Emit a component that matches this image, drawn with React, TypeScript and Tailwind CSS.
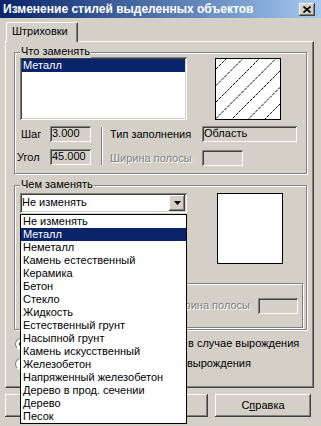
import React from "react";

// win2k 3d borders
const sunken =
  "shadow-[inset_1px_1px_0_#808080,inset_-1px_-1px_0_#ffffff,inset_2px_2px_0_#404040,inset_-2px_-2px_0_#d4d0c8]";
const raised =
  "shadow-[inset_-1px_-1px_0_#404040,inset_1px_1px_0_#ffffff,inset_-2px_-2px_0_#808080,inset_2px_2px_0_#d4d0c8]";
const etched =
  "border border-[#808080] shadow-[inset_1px_1px_0_#ffffff,1px_1px_0_#ffffff]";
const grayText = "text-[#808080] [text-shadow:1px_1px_0_#ffffff]";

const materials = [
  "Не изменять",
  "Металл",
  "Неметалл",
  "Камень естественный",
  "Керамика",
  "Бетон",
  "Стекло",
  "Жидкость",
  "Естественный грунт",
  "Насыпной грунт",
  "Камень искусственный",
  "Железобетон",
  "Напряженный железобетон",
  "Дерево в прод. сечении",
  "Дерево",
  "Песок",
];

function Legend({ children }: { children: React.ReactNode }) {
  return (
    <span className="absolute left-[5px] -top-[8px] bg-[#d4d0c8] px-[1px] leading-[13px]">
      {children}
    </span>
  );
}

function Field({ w, text }: { w: string; text?: string }) {
  return (
    <div className={`${w} h-[16px] bg-[#d4d0c8] ${sunken} pl-[2px] pt-[1px] leading-[13px]`}>
      {text}
    </div>
  );
}

function Hatch() {
  const lines = [10, 26.5, 43, 59.5, 76, 92.5, 109, 125.5];
  return (
    <svg width="64" height="60" className="block">
      {lines.map((c) => (
        <line
          key={c}
          x1={0}
          y1={c}
          x2={c}
          y2={0}
          stroke="#000"
          strokeWidth={1}
          strokeDasharray="3 1"
        />
      ))}
    </svg>
  );
}

function Radio({ checked }: { checked?: boolean }) {
  return (
    <div className="w-[12px] h-[12px] rounded-full bg-white border border-t-[#808080] border-l-[#808080] border-b-white border-r-white flex items-center justify-center shrink-0">
      {checked && <div className="w-[4px] h-[4px] rounded-full bg-black" />}
    </div>
  );
}

export default function App() {
  return (
    <div className="relative w-[321px] h-[426px] overflow-hidden bg-[#d4d0c8] text-black text-[11px] leading-[13px] [font-family:'Liberation_Sans',Arial,sans-serif]">
      {/* title bar */}
      <div className="h-[18px] flex items-center justify-between pl-[3px] pr-[6px] bg-linear-to-r from-[#0a246a] to-[#a6caf0]">
        <span className="text-white font-bold text-[12px] whitespace-nowrap">
          Изменение стилей выделенных объектов
        </span>
        <div className={`w-[16px] h-[13px] bg-[#d4d0c8] ${raised} flex items-center justify-center`}>
          <svg width="8" height="7">
            <path d="M0.5 0.5 L7.5 6.5 M7.5 0.5 L0.5 6.5" stroke="#000" strokeWidth="1.6" />
          </svg>
        </div>
      </div>

      {/* tab */}
      <div className="relative z-10 ml-[6px] mt-[4px] w-[72px] h-[20px] bg-[#d4d0c8] border-l border-t border-white border-r border-r-[#404040] rounded-t-[2px] shadow-[inset_-1px_0_0_#808080] pl-[5px] pt-[2px]">
        Штриховки
      </div>

      {/* tab panel */}
      <div className="-mt-[1px] ml-[5px] w-[309px] h-[347px] border-l border-t border-white border-r border-b border-r-[#404040] border-b-[#404040] shadow-[inset_-1px_-1px_0_#808080]">
        {/* what to replace */}
        <div className={`relative ml-[8px] mt-[10px] w-[293px] h-[122px] ${etched} pt-[4px]`}>
          <Legend>Что заменять</Legend>
          <div className="flex pl-[5px]">
            <div className={`w-[167px] h-[63px] bg-white ${sunken} p-[2px]`}>
              <div className="h-[13px] bg-[#0a246a] text-white pl-[1px]">Металл</div>
            </div>
            <div className="ml-[28px] mt-[1px] w-[66px] h-[62px] border border-black bg-white">
              <Hatch />
            </div>
          </div>

          <div className="flex mt-[6px]">
            <div className="flex flex-col gap-[7px]">
              <div className="flex items-center">
                <span className="w-[35px] pl-[6px]">Шаг</span>
                <Field w="w-[41px]" text="3.000" />
              </div>
              <div className="flex items-center">
                <span className="w-[35px] pl-[2px]">Угол</span>
                <Field w="w-[41px]" text="45.000" />
              </div>
            </div>
            <div className="ml-[10px] mt-[1px] w-[2px] h-[38px] border-l border-l-[#808080] border-r border-r-white" />
            <div className="ml-[7px] flex flex-col gap-[8px]">
              <div className="flex items-center">
                <span className="w-[92px]">Тип заполнения</span>
                <Field w="w-[95px]" text="Область" />
              </div>
              <div className="flex items-center">
                <span className={`w-[92px] ${grayText}`}>Ширина полосы</span>
                <Field w="w-[41px]" />
              </div>
            </div>
          </div>
        </div>

        {/* replace with */}
        <div className={`relative ml-[8px] mt-[11px] w-[293px] h-[145px] ${etched} pt-[7px]`}>
          <Legend>Чем заменять</Legend>
          <div className="flex pl-[5px]">
            <div className={`relative w-[167px] h-[20px] bg-white ${sunken} pl-[2px] pt-[3px]`}>
              Не изменять
              <div className={`absolute right-[2px] top-[2px] w-[16px] h-[16px] bg-[#d4d0c8] ${raised} flex items-center justify-center`}>
                <svg width="7" height="4">
                  <polygon points="0,0 7,0 3.5,4" fill="#000" />
                </svg>
              </div>
            </div>
            <div className="ml-[30px] w-[66px] h-[71px] border border-black bg-white" />
          </div>

          <div className={`ml-[5px] mt-[19px] w-[283px] h-[45px] ${etched} flex justify-end items-center pr-[4px]`}>
            <span className={grayText}>рина полосы</span>
            <div className="ml-[8px]">
              <Field w="w-[40px]" />
            </div>
          </div>
        </div>

        {/* radios, labels mostly covered by the open list */}
        <div className="ml-[9px] mt-[7px] flex flex-col gap-[7px]">
          <div className="flex items-center h-[13px] whitespace-nowrap">
            <Radio checked />
            <span className="ml-[161px]">в случае вырождения</span>
          </div>
          <div className="flex items-center h-[13px] whitespace-nowrap">
            <Radio />
            <span className="ml-[160px]">вырождения</span>
          </div>
        </div>
      </div>

      {/* buttons */}
      <div className="flex mt-[6px] ml-[5px] gap-[7px]">
        <div className={`w-[98px] h-[23px] ${raised}`} />
        <div className={`w-[98px] h-[23px] ${raised}`} />
        <div className={`w-[96px] h-[23px] ${raised} flex items-center justify-center`}>
          С<span className="underline">п</span>равка
        </div>
      </div>

      {/* open dropdown list */}
      <div className="absolute left-[20px] top-[214px] w-[167px] h-[210px] border border-black bg-white">
        {materials.map((m, i) => (
          <div
            key={m}
            className={`h-[13px] pl-[2px] whitespace-nowrap ${i === 1 ? "bg-[#0a246a] text-white" : ""}`}
          >
            {m}
          </div>
        ))}
      </div>
    </div>
  );
}
